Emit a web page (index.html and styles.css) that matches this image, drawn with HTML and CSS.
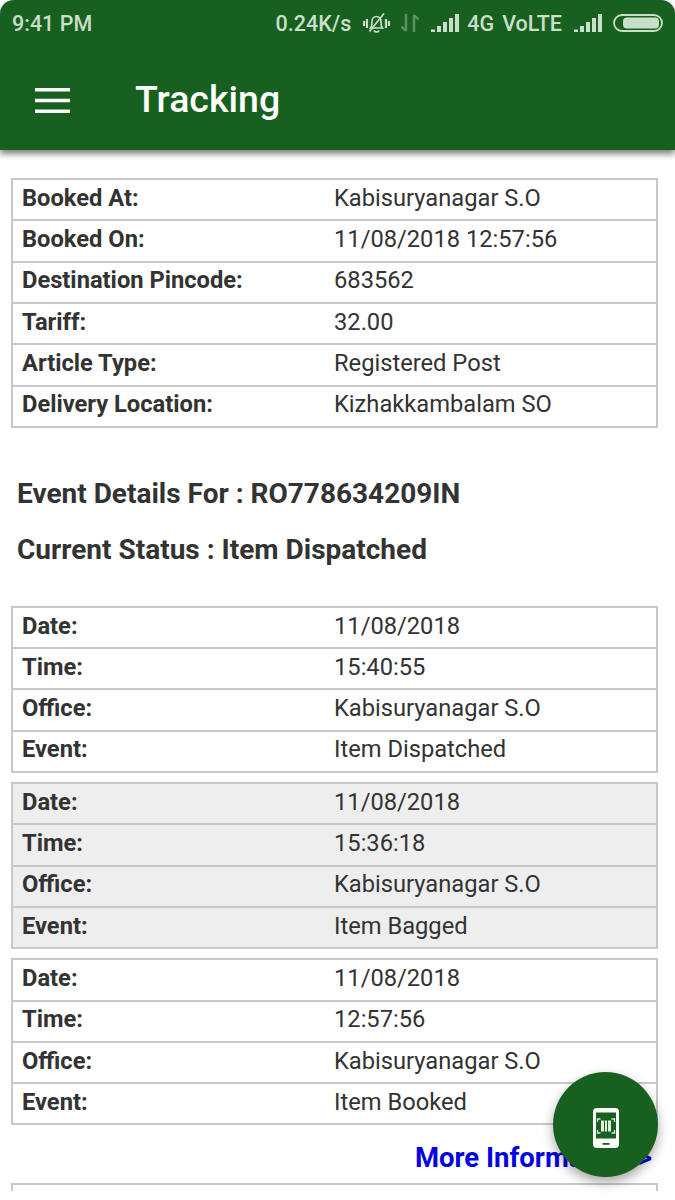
FILE: index.html
```html
<!DOCTYPE html>
<html lang="en">
<head>
<meta charset="utf-8">
<title>Tracking</title>
<link rel="stylesheet" href="styles.css">
</head>
<body>
<div class="screen">
  <header class="header">
    <div class="status">
      <span class="time">9:41 PM</span>
      <div class="status-right">
        <span class="speed">0.24K/s</span>
        <svg class="ic-bell" width="27" height="22" viewBox="0 0 27 22" fill="none" stroke="#c9dfc9" stroke-width="1.7"><path d="M7.500 16c1.500-1.500 1.500-3.500 1.500-6.500 0-3 2-5 4.500-5s4.500 2 4.500 5c0 3 0 5 1.500 6.500z"/><path d="M11 18.500c1 2 4 2 5 0"/><path d="M21 1.500L6.500 19.500"/><path d="M1 9v5M4 7v9M23 7v9M26 9v5" stroke-width="2.200"/></svg>
        <svg class="ic-data" width="18" height="20" viewBox="0 0 18 20" fill="none" stroke="#5e9263" stroke-width="2.400"><path d="M5 1v17M.5 13.500L5 18"/><path d="M13 19V2M13 2l4.500 4.500"/></svg>
        <svg class="ic-signal" width="28" height="18" viewBox="0 0 28 18" fill="#c9dfc9"><rect x="0" y="15.500" width="4" height="2.500"/><rect x="6" y="12" width="4" height="6"/><rect x="12" y="8" width="4" height="10"/><rect x="18" y="4" width="4" height="14"/><rect x="24" y="0" width="4" height="18"/></svg>
        <span class="net">4G</span>
        <span class="net volte">VoLTE</span>
        <svg class="ic-signal" width="28" height="18" viewBox="0 0 28 18" fill="#c9dfc9"><rect x="0" y="15.500" width="4" height="2.500"/><rect x="6" y="12" width="4" height="6"/><rect x="12" y="8" width="4" height="10"/><rect x="18" y="4" width="4" height="14"/><rect x="24" y="0" width="4" height="18"/></svg>
        <svg class="ic-battery" width="50" height="18" viewBox="0 0 50 18"><rect x="1" y="1" width="48" height="16" rx="8" fill="none" stroke="#c9dfc9" stroke-width="1.800"/><rect x="10" y="3.500" width="36" height="11" rx="4" fill="#c9dfc9"/></svg>
      </div>
    </div>
    <div class="appbar">
      <svg class="menu" width="35" height="25" viewBox="0 0 35 25" fill="#fff"><rect width="35" height="3.500" y="0"/><rect width="35" height="3.500" y="10.750"/><rect width="35" height="3.500" y="21.500"/></svg>
      <h1 class="title">Tracking</h1>
    </div>
  </header>

  <main class="content">
    <table class="info first">
      <tr><th>Booked At:</th><td>Kabisuryanagar S.O</td></tr>
      <tr><th>Booked On:</th><td>11/08/2018 12:57:56</td></tr>
      <tr><th>Destination Pincode:</th><td>683562</td></tr>
      <tr><th>Tariff:</th><td>32.00</td></tr>
      <tr><th>Article Type:</th><td>Registered Post</td></tr>
      <tr><th>Delivery Location:</th><td>Kizhakkambalam SO</td></tr>
    </table>

    <h2 class="heading h-event">Event Details For : RO778634209IN</h2>
    <h2 class="heading h-status">Current Status : Item Dispatched</h2>

    <div class="events">
      <table class="info">
        <tr><th>Date:</th><td>11/08/2018</td></tr>
        <tr><th>Time:</th><td>15:40:55</td></tr>
        <tr><th>Office:</th><td>Kabisuryanagar S.O</td></tr>
        <tr><th>Event:</th><td>Item Dispatched</td></tr>
      </table>
      <table class="info alt">
        <tr><th>Date:</th><td>11/08/2018</td></tr>
        <tr><th>Time:</th><td>15:36:18</td></tr>
        <tr><th>Office:</th><td>Kabisuryanagar S.O</td></tr>
        <tr><th>Event:</th><td>Item Bagged</td></tr>
      </table>
      <table class="info">
        <tr><th>Date:</th><td>11/08/2018</td></tr>
        <tr><th>Time:</th><td>12:57:56</td></tr>
        <tr><th>Office:</th><td>Kabisuryanagar S.O</td></tr>
        <tr><th>Event:</th><td>Item Booked</td></tr>
      </table>
    </div>

    <div class="more-row"><a class="more" href="#">More Information &gt;</a></div>
    <div class="next-table"></div>
  </main>

  <button class="fab" aria-label="Scan">
    <svg width="26" height="40" viewBox="0 0 26 40"><rect width="26" height="40" rx="4" fill="#fff"/><rect x="3" y="4.500" width="20" height="26" fill="#18601f"/><rect x="9.500" y="35" width="7" height="1.800" fill="#18601f"/><path d="M4.500 14v-3h3M18.500 11h3v3M21.500 22v3h-3M7.500 25h-3v-3" fill="none" stroke="#d8e8d8" stroke-width="1.300"/><path d="M8 12.500h3v11H8zM12 12.500h2v11h-2zM15 12.500h3v11h-3z" fill="#e2eee2"/></svg>
  </button>
</div>
</body>
</html>
```
FILE: styles.css
```css
* { box-sizing: border-box; }
html, body { margin: 0; padding: 0; background: #fff; }
body { width: 675px; height: 1200px; overflow: hidden; font-family: Roboto, "Liberation Sans", sans-serif; color: #333; }
.screen { position: relative; width: 675px; height: 1200px; overflow: hidden; background: #fff; }

.header { height: 150px; background: #18601f; box-shadow: 0 4px 6px rgba(0,0,0,.5); border-radius: 14px 14px 0 0; display: flex; flex-direction: column; }
.status { height: 46px; padding: 0 12px; display: flex; align-items: center; justify-content: space-between; color: #c9dfc9; font-weight: 500; font-size: 21.5px; }
.status-right { display: flex; align-items: center; }
.speed { margin-right: 12px; }
.ic-bell { margin-right: 11px; }
.ic-data { margin-right: 12px; }
.net { margin-left: 8px; }
.volte { margin-right: 12px; }
.ic-battery { margin-left: 11px; }

.appbar { flex: 1; display: flex; align-items: center; padding: 4px 0 0 35px; }
.menu { margin-right: 65px; flex: none; }
.title { margin: 0; font-size: 37.500px; font-weight: 500; color: #fff; line-height: 1; }

.content { padding: 28px 17px 0 11px; }
.info { width: 647px; border-collapse: collapse; table-layout: fixed; border: 2px solid #c8c8c8; font-size: 23.700px; color: #333; }
.info tr { height: 41.200px; }
.info.first tr { height: 41.330px; }
.info th, .info td { border-top: 2px solid #c8c8c8; padding: 0 0 2px 10px; text-align: left; line-height: 1; white-space: nowrap; }
.info tr:first-child th, .info tr:first-child td { border-top: 0; }
.info th { width: 312px; padding-left: 9px; font-weight: 700; }
.info td { font-weight: 400; }
.info.alt { background: #eee; }

.heading { margin: 0 0 0 6px; font-size: 28px; font-weight: 700; color: #333; line-height: 30px; }
.h-event { margin-top: 51px; }
.h-status { margin-top: 26px; }
.events { display: flex; flex-direction: column; gap: 9.500px; margin-top: 41px; }

.more-row { display: flex; justify-content: flex-end; padding-right: 6px; margin-top: 17px; height: 32px; }
.more { font-size: 27.500px; font-weight: 700; color: #0000e0; text-decoration: none; line-height: 32px; white-space: nowrap; }
.next-table { height: 8px; margin-top: 9px; width: 647px; border: 2px solid #c8c8c8; border-bottom: 0; }

.fab { position: absolute; left: 553px; top: 1072px; width: 105px; height: 105px; border: 0; border-radius: 50%; padding: 7px 0 0; background: #18601f; box-shadow: 0 5px 12px rgba(0,0,0,.35); display: flex; align-items: center; justify-content: center; }
```
